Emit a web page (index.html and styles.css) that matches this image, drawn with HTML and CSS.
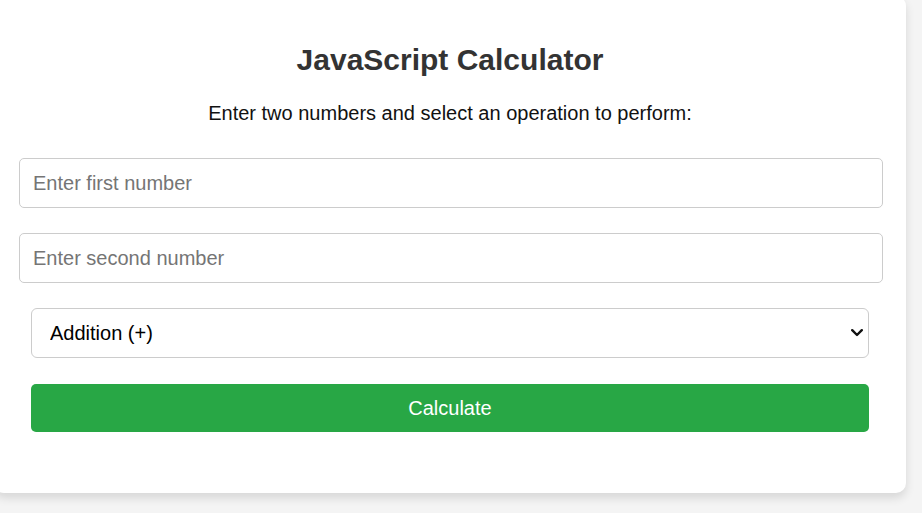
FILE: index.html
```html
<!DOCTYPE html>
<html lang="en">
<head>
<meta charset="utf-8">
<title>JavaScript Calculator</title>
<link rel="stylesheet" href="styles.css">
</head>
<body>
<div class="card">
  <h2 class="title">JavaScript Calculator</h2>
  <p class="intro">Enter two numbers and select an operation to perform:</p>
  <div class="form">
    <input class="field" type="number" placeholder="Enter first number">
    <input class="field" type="number" placeholder="Enter second number">
    <div class="select-wrap">
      <select class="select">
        <option>Addition (+)</option>
        <option>Subtraction (-)</option>
        <option>Multiplication (*)</option>
        <option>Division (/)</option>
      </select>
      <svg class="chevron" width="12" height="8" viewBox="0 0 12 8"><path d="M1.2 1.2 L6 6 L10.8 1.2" fill="none" stroke="#111" stroke-width="2.4" stroke-linecap="round" stroke-linejoin="round"/></svg>
    </div>
    <button class="btn" type="button">Calculate</button>
  </div>
</div>
</body>
</html>
```
FILE: styles.css
```css
html, body {
  margin: 0;
  padding: 0;
}
body {
  background: #f4f4f4;
  font-family: "Liberation Sans", Arial, sans-serif;
  height: 513px;
  overflow: hidden;
}
.card {
  box-sizing: border-box;
  width: 912px;
  margin: -4px 0 0 -6px;
  padding: 18px 37px 61px 37px;
  background: #fff;
  border-radius: 10px;
  box-shadow: 0 5px 10px rgba(0, 0, 0, 0.12);
  text-align: center;
}
.title {
  margin: 28px 0 0;
  font-size: 30px;
  line-height: 35px;
  font-weight: bold;
  color: #333;
}
.intro {
  margin: 25px 0 0;
  font-size: 20px;
  line-height: 23px;
  color: #111;
}
.form {
  display: flex;
  flex-direction: column;
  gap: 25px;
  margin-top: 33px;
}
.field {
  box-sizing: border-box;
  height: 50px;
  margin: 0 -14px 0 -12px;
  padding: 0 13px;
  border: 1px solid #ccc;
  border-radius: 5px;
  font-family: "Liberation Sans", Arial, sans-serif;
  font-size: 20px;
  color: #222;
  background: #fff;
  outline: none;
  -moz-appearance: textfield;
}
.field::-webkit-outer-spin-button,
.field::-webkit-inner-spin-button {
  -webkit-appearance: none;
  margin: 0;
}
.field::placeholder {
  color: #757575;
}
.select-wrap {
  position: relative;
  height: 50px;
}
.select {
  box-sizing: border-box;
  width: 100%;
  height: 50px;
  padding: 0 18px;
  border: 1px solid #ccc;
  border-radius: 6px;
  background: #fff;
  font-family: "Liberation Sans", Arial, sans-serif;
  font-size: 20px;
  color: #000;
  -webkit-appearance: none;
  appearance: none;
  outline: none;
}
.chevron {
  position: absolute;
  right: 6px;
  top: 21px;
  pointer-events: none;
}
.btn {
  height: 48px;
  margin-top: 1px;
  border: none;
  border-radius: 5px;
  background: #28a745;
  color: #fff;
  font-family: "Liberation Sans", Arial, sans-serif;
  font-size: 20px;
  cursor: pointer;
}
```
